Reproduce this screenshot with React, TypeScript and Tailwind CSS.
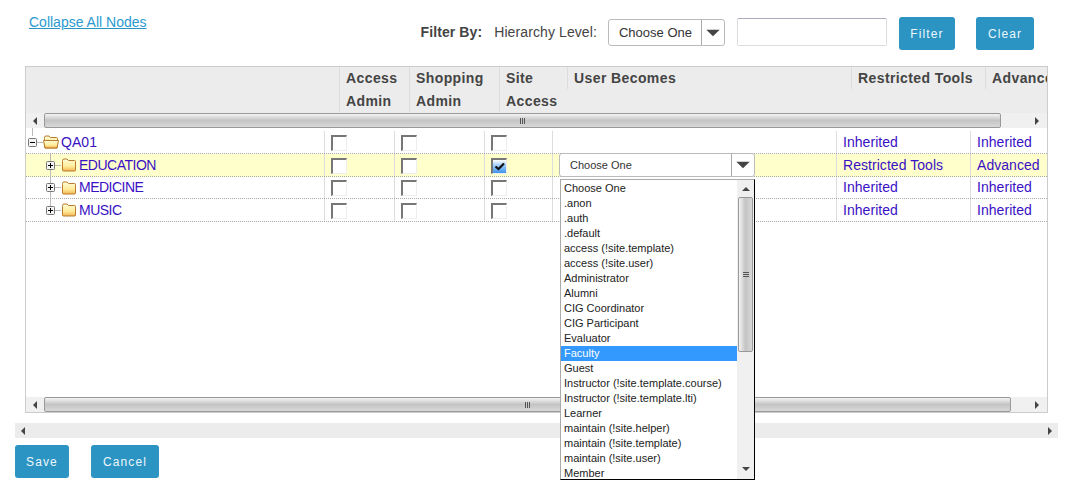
import type { ReactNode } from "react";

const ROLES = [
  "Choose One",
  ".anon",
  ".auth",
  ".default",
  "access (!site.template)",
  "access (!site.user)",
  "Administrator",
  "Alumni",
  "CIG Coordinator",
  "CIG Participant",
  "Evaluator",
  "Faculty",
  "Guest",
  "Instructor (!site.template.course)",
  "Instructor (!site.template.lti)",
  "Learner",
  "maintain (!site.helper)",
  "maintain (!site.template)",
  "maintain (!site.user)",
  "Member",
];

const ROWS = [
  { name: "QA01", root: true, h: "h-[23px]", tools: "Inherited", adv: "Inherited" },
  { name: "EDUCATION", active: true, h: "h-[23px]", tools: "Restricted Tools", adv: "Advanced" },
  { name: "MEDICINE", h: "h-[22px]", tools: "Inherited", adv: "Inherited" },
  { name: "MUSIC", last: true, h: "h-[23px]", tools: "Inherited", adv: "Inherited" },
];

function Triangle({ dir, className }: { dir: "l" | "r" | "u" | "d"; className?: string }) {
  const points = {
    l: "5,0 5,8 1,4",
    r: "1,0 1,8 5,4",
    u: "0,5 8,5 4,1",
    d: "0,1 8,1 4,5",
  }[dir];
  const box = dir === "l" || dir === "r" ? "0 0 6 8" : "0 0 8 6";
  return (
    <svg viewBox={box} className={className}>
      <polygon points={points} fill="#444" />
    </svg>
  );
}

function HScrollbar({ thumb }: { thumb: number }) {
  return (
    <div className="flex h-[15px] shrink-0 items-center bg-[#f0f0f0]">
      <div className="flex h-full w-[18px] shrink-0 items-center justify-center">
        <Triangle dir="l" className="h-[8px] w-[6px]" />
      </div>
      <div
        className="relative flex h-[15px] items-center justify-center rounded-[2px] border border-[#999] bg-gradient-to-b from-[#f4f4f4] via-[#c4c4c4] to-[#d8d8d8]"
        style={{ width: thumb }}
      >
        <span className="flex gap-[1px]">
          <i className="h-[6px] w-[1px] bg-[#555]" />
          <i className="h-[6px] w-[1px] bg-[#555]" />
          <i className="h-[6px] w-[1px] bg-[#555]" />
        </span>
      </div>
      <div className="flex h-full flex-1 items-center justify-end pr-[7px]">
        <Triangle dir="r" className="h-[8px] w-[6px]" />
      </div>
    </div>
  );
}

function Checkbox({ checked }: { checked?: boolean }) {
  return (
    <div
      className={`relative mt-[1px] h-[16px] w-[16px] border-t-2 border-r border-b border-l-2 border-t-[#777] border-r-[#eee] border-b-[#eee] border-l-[#777] ${
        checked ? "bg-gradient-to-b from-white via-[#8cc4f8] to-[#3f94ee]" : "bg-white"
      }`}
    >
      {checked && (
        <svg viewBox="0 0 14 14" className="absolute top-0 left-0 h-[14px] w-[14px]">
          <path d="M2.5 6.5 L5.5 9 L11 3.5" fill="none" stroke="#111" strokeWidth="2.2" />
        </svg>
      )}
    </div>
  );
}

function Folder({ open }: { open?: boolean }) {
  return (
    <svg viewBox="0 0 16 14" className="h-[14px] w-[16px] shrink-0">
      <defs>
        <linearGradient id="folderFill" x1="0" y1="0" x2="0" y2="1">
          <stop offset="0" stopColor="#fffbd8" />
          <stop offset="0.6" stopColor="#ffec9a" />
          <stop offset="1" stopColor="#f4b454" />
        </linearGradient>
      </defs>
      <path
        d="M1.5 3.5 L1.5 2.5 Q1.5 1 3 1 L6 1 L7.5 2.5 L13.5 2.5 Q14.5 2.5 14.5 3.5 L14.5 12 Q14.5 13 13.5 13 L2.5 13 Q1.5 13 1.5 12 Z"
        fill="url(#folderFill)"
        stroke="#b97a2c"
      />
      {open && <path d="M0.5 5.5 L15.5 5.5 L14 13 L2 13 Z" fill="url(#folderFill)" stroke="#b97a2c" />}
    </svg>
  );
}

function Expander({ open }: { open?: boolean }) {
  return (
    <svg viewBox="0 0 9 9" className="relative h-[9px] w-[9px] shrink-0">
      <rect x="0.5" y="0.5" width="8" height="8" rx="1" fill="#f4f4f4" stroke="#777" />
      <path d="M2 4.5 H7" stroke="#000" />
      {!open && <path d="M4.5 2 V7" stroke="#000" />}
    </svg>
  );
}

function SelectBox({ label, className }: { label: string; className: string }) {
  return (
    <div className={`flex items-center rounded-[3px] border border-[#bbb] bg-white text-[#333] ${className}`}>
      <span className="flex-1 pt-[1px] whitespace-nowrap">{label}</span>
      <span className="h-full w-[1px] bg-[#aaa]" />
      <span className="flex w-[22px] justify-center">
        <Triangle dir="d" className="h-[10px] w-[14px]" />
      </span>
    </div>
  );
}

function RoleList() {
  return (
    <div className="absolute top-[26px] left-[1px] z-10 flex h-[301px] w-[195px] border-t border-r border-b border-l border-t-[#aaa] border-r-black border-b-black border-l-[#aaa] bg-white text-[11px] text-[#222]">
      <ul className="flex-1 overflow-hidden pt-[1px]">
        {ROLES.map((r) => (
          <li key={r} className={`h-[15px] pl-[3px] leading-[15px] ${r === "Faculty" ? "bg-[#3399ff] text-white" : ""}`}>
            {r}
          </li>
        ))}
      </ul>
      <div className="flex w-[17px] shrink-0 flex-col items-center bg-[#f0f0f0]">
        <div className="flex h-[17px] items-center">
          <Triangle dir="u" className="h-[6px] w-[8px]" />
        </div>
        <div className="flex h-[155px] w-[15px] items-center justify-center rounded-[2px] border border-[#999] bg-gradient-to-r from-[#f4f4f4] via-[#c4c4c4] to-[#d8d8d8]">
          <span className="flex flex-col gap-[1px]">
            <i className="h-[1px] w-[6px] bg-[#555]" />
            <i className="h-[1px] w-[6px] bg-[#555]" />
            <i className="h-[1px] w-[6px] bg-[#555]" />
          </span>
        </div>
        <div className="flex flex-1 items-end pb-[7px]">
          <Triangle dir="d" className="h-[6px] w-[8px]" />
        </div>
      </div>
    </div>
  );
}

function Th({ w, tall, children }: { w: string; tall?: boolean; children: ReactNode }) {
  return (
    <div className={`${w} relative shrink-0 pl-[7px]`}>
      <span className={`absolute top-0 left-0 w-[1px] bg-[#dcdcdc] ${tall ? "h-[45px]" : "h-[22px]"}`} />
      {children}
    </div>
  );
}

function Cell({ w, children }: { w: string; children?: ReactNode }) {
  return <div className={`${w} flex h-full shrink-0 items-center border-l border-[#ddd] pl-[6px]`}>{children}</div>;
}

function Btn({ w, children }: { w: string; children: ReactNode }) {
  return (
    <button
      type="button"
      className={`${w} h-[33px] rounded-[3px] bg-[#2b94c3] text-[12px] tracking-[1.1px] text-[#eef7fb]`}
    >
      {children}
    </button>
  );
}

export default function App() {
  return (
    <div className="h-[488px] w-[1067px] overflow-hidden bg-white font-['Liberation_Sans',Arial,sans-serif] text-[14px]">
      <div className="flex h-[66px] items-start">
        <a className="mt-[12px] ml-[29px] text-[#2b9ad0] underline decoration-[#2b94c3]">Collapse All Nodes</a>
        <div className="mt-[17px] ml-[274px] flex items-start">
          <b className="mt-[5px] tracking-[0.1px] text-[#444]">Filter By:</b>
          <span className="mt-[5px] ml-[12px] tracking-[0.1px] text-[#444]">Hierarchy Level:</span>
          <SelectBox label="Choose One" className="mt-[2px] ml-[11px] h-[27px] w-[117px] pl-[10px] text-[13px]" />
          <div className="mt-[1px] ml-[12px] h-[28px] w-[150px] rounded-[2px] border border-[#ddd] border-t-[#aab]" />
          <div className="ml-[12px]">
            <Btn w="w-[56px]">Filter</Btn>
          </div>
          <div className="ml-[21px]">
            <Btn w="w-[58px]">Clear</Btn>
          </div>
        </div>
      </div>

      <div className="ml-[25px] flex h-[347px] w-[1023px] flex-col border border-[#ccc]">
        <div className="flex h-[46px] shrink-0 overflow-hidden bg-[#ececec] leading-[23px] font-bold tracking-[0.4px] text-[#444]">
          <div className="w-[313px] shrink-0" />
          <Th w="w-[70px]" tall>
            Access
            <br />
            Admin
          </Th>
          <Th w="w-[90px]" tall>
            Shopping
            <br />
            Admin
          </Th>
          <Th w="w-[68px]" tall>
            Site
            <br />
            Access
          </Th>
          <Th w="w-[284px]">User Becomes</Th>
          <Th w="w-[134px]">Restricted Tools</Th>
          <Th w="w-[134px]">Advanced</Th>
        </div>
        <HScrollbar thumb={957} />
        <div className="flex-1 pt-[3px]">
          {ROWS.map((row) => (
            <div
              key={row.name}
              className={`${row.h} flex items-center border-b border-dotted border-[#aaa] tracking-[0.05px] text-[#3a10c4] ${
                row.active ? "bg-[#ffffcc]" : ""
              }`}
            >
              <div className="relative flex h-full w-[298px] shrink-0 items-center">
                {row.root ? (
                  <>
                    <i className="absolute top-[-3px] left-[6px] h-[8px] w-[1px] bg-[#bbb]" />
                    <span className="ml-[2px] flex">
                      <Expander open />
                    </span>
                    <i className="h-[1px] w-[6px] bg-[#bbb]" />
                    <Folder open />
                    <span className="ml-[2px]">{row.name}</span>
                  </>
                ) : (
                  <>
                    <i
                      className={`absolute top-0 left-[24px] w-[1px] bg-[#bbb] ${row.last ? "h-[11px]" : "h-[23px]"}`}
                    />
                    <span className="ml-[20px] flex">
                      <Expander />
                    </span>
                    <i className="h-[1px] w-[6px] bg-[#bbb]" />
                    <Folder />
                    <span className="ml-[2px] tracking-[-0.5px]">{row.name}</span>
                  </>
                )}
              </div>
              <Cell w="w-[70px]">
                <Checkbox />
              </Cell>
              <Cell w="w-[90px]">
                <Checkbox />
              </Cell>
              <Cell w="w-[68px]">
                <Checkbox checked={row.active} />
              </Cell>
              <Cell w="w-[284px]">
                {row.active && (
                  <div className="relative tracking-normal">
                    <SelectBox label="Choose One" className="h-[24px] w-[196px] pl-[10px] text-[11px]" />
                    <RoleList />
                  </div>
                )}
              </Cell>
              <Cell w="w-[134px]">{row.tools}</Cell>
              <Cell w="w-[77px]">{row.adv}</Cell>
            </div>
          ))}
        </div>
        <HScrollbar thumb={967} />
      </div>

      <div className="mt-[10px] ml-[15px] flex h-[15px] w-[1043px] items-center justify-between bg-[#ececec] px-[5px]">
        <Triangle dir="l" className="h-[8px] w-[6px]" />
        <Triangle dir="r" className="h-[8px] w-[6px]" />
      </div>

      <div className="mt-[7px] ml-[15px] flex gap-[22px]">
        <Btn w="w-[54px]">Save</Btn>
        <Btn w="w-[68px]">Cancel</Btn>
      </div>
    </div>
  );
}
